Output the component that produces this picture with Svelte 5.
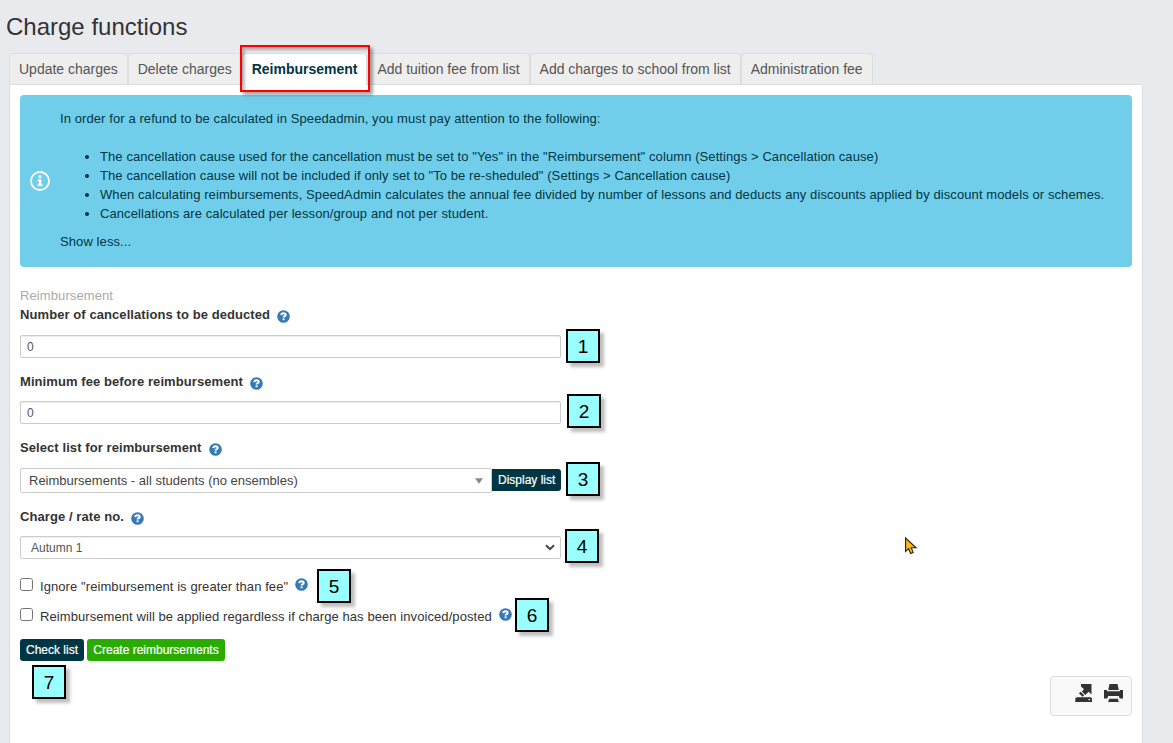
<script lang="ts">
  const tabs: string[] = [
    "Update charges",
    "Delete charges",
    "Reimbursement",
    "Add tuition fee from list",
    "Add charges to school from list",
    "Administration fee",
  ];
  let active = "Reimbursement";

  const notes: string[] = [
    'The cancellation cause used for the cancellation must be set to "Yes" in the "Reimbursement" column (Settings > Cancellation cause)',
    'The cancellation cause will not be included if only set to "To be re-sheduled" (Settings > Cancellation cause)',
    "When calculating reimbursements, SpeedAdmin calculates the annual fee divided by number of lessons and deducts any discounts applied by discount models or schemes.",
    "Cancellations are calculated per lesson/group and not per student.",
  ];

  let deducted = "0";
  let minimumFee = "0";
  let ignoreGreater = false;
  let applyRegardless = false;

  // numbered callouts lying over the form
  const callouts = [
    { n: 1, x: 566, y: 329 },
    { n: 2, x: 567, y: 394 },
    { n: 3, x: 566, y: 462 },
    { n: 4, x: 565, y: 529 },
    { n: 5, x: 317, y: 569 },
    { n: 6, x: 515, y: 598 },
    { n: 7, x: 32, y: 665 },
  ];
</script>

{#snippet help()}
  <svg class="help" viewBox="0 0 13 13">
    <circle cx="6.5" cy="6.5" r="6.3" fill="#337ab7" />
    <path
      d="M4.3 5.100C4.400 3.700 5.400 3.200 6.500 3.200C7.800 3.200 8.700 3.900 8.700 4.900C8.700 6.300 6.600 6.100 6.600 7.600"
      fill="none"
      stroke="#fff"
      stroke-width="2"
    />
    <path d="M5.600 8.400h2v1.800h-2z" fill="#fff" />
  </svg>
{/snippet}

<div class="page">
  <h1>Charge functions</h1>

  <div class="tabs">
    {#each tabs as tab}
      <button class="tab" class:active={tab === active} on:click={() => (active = tab)}>{tab}</button>
    {/each}
  </div>

  <div class="panel">
    <div class="info">
      <svg class="infoIcon" viewBox="0 0 20 20">
        <circle cx="10" cy="10" r="9" fill="none" stroke="#fff" stroke-width="1.8" />
        <path d="M8.6 4.6h2.8v2.5H8.6zM7.8 8.3h3.6v4.8h1v1.8H7.800v-1.8h1V10h-1z" fill="#fff" />
      </svg>
      <div class="infoText">
        <p>In order for a refund to be calculated in Speedadmin, you must pay attention to the following:</p>
        <ul>
          {#each notes as note}
            <li>{note}</li>
          {/each}
        </ul>
        <p>Show less...</p>
      </div>
    </div>

    <div class="form">
      <div class="legend">Reimbursement</div>
      <div class="label">Number of cancellations to be deducted {@render help()}</div>
      <input class="field" type="text" bind:value={deducted} />

      <div class="label second">Minimum fee before reimbursement {@render help()}</div>
      <input class="field" type="text" bind:value={minimumFee} />

      <div class="label third">Select list for reimbursement {@render help()}</div>
      <div class="listRow">
        <div class="combo">
          <span>Reimbursements - all students (no ensembles)</span>
          <svg width="8" height="6" viewBox="0 0 8 6"><path d="M0 .3h8L4 5.7z" fill="#888" /></svg>
        </div>
        <button class="btn dark">Display list</button>
      </div>

      <div class="label fourth">Charge / rate no. {@render help()}</div>
      <div class="select">
        <span>Autumn 1</span>
        <svg width="10" height="7" viewBox="0 0 10 7">
          <path d="M1 1.2l4 4 4-4" fill="none" stroke="#444" stroke-width="2" />
        </svg>
      </div>

      <label class="check">
        <input type="checkbox" bind:checked={ignoreGreater} />
        <span>Ignore "reimbursement is greater than fee"</span>
        {@render help()}
      </label>
      <label class="check">
        <input type="checkbox" bind:checked={applyRegardless} />
        <span>Reimbursement will be applied regardless if charge has been invoiced/posted</span>
        {@render help()}
      </label>

      <div class="actions">
        <button class="btn dark">Check list</button>
        <button class="btn green">Create reimbursements</button>
      </div>
    </div>

    <div class="tools">
      <svg width="18" height="19" viewBox="0 0 18 19" fill="#333">
        <path d="M6 0h10.500v10.500L13.600 7.700 10.300 11 6.800 7.500 9 5.200 6 2.500zM5.600 7.700l3.600 3.600-1.700 1.500-3.600-3.500z" />
        <path d="M1.500 13.200h14.500l1 1.200V18H.300v-3.600zM13.500 15v1.300H15V15z" fill-rule="evenodd" />
      </svg>
      <svg width="19" height="19" viewBox="0 0 19 19" fill="#333">
        <path d="M5.500 0h8l1.300 6H4.200z" />
        <path d="M0 6h3v1.300h13V6h3v8.500h-3.200L14.700 12H4.300l-1.100 2.500H0z" />
        <path d="M5.300 14.700h8.400l1.200 3.300H4.100z" />
      </svg>
    </div>
  </div>

  <div class="highlight"></div>
  {#each callouts as c}
    <div class="callout" style="left: {c.x}px; top: {c.y}px;">{c.n}</div>
  {/each}
  <svg class="cursor" width="13" height="18" viewBox="0 0 13 18">
    <path
      d="M.6 1v13.500l3-2.800 2 4.800 2.600-1.100-2-4.600h4.900z"
      fill="#ffb90f"
      stroke="#222"
      stroke-width="1.1"
    />
  </svg>
</div>

<style>
  :global(body) {
    background: #e9eaee;
  }
  .page {
    position: relative;
    box-sizing: border-box;
    width: 1173px;
    height: 743px;
    padding-left: 9px;
    overflow: hidden;
    display: flex;
    flex-direction: column;
    font-family: "Liberation Sans", Arial, sans-serif;
    font-size: 13px;
    line-height: 19px;
    color: #333;
  }
  h1 {
    margin: 12px 0 11px -3px;
    font-size: 24px;
    line-height: 30px;
    font-weight: normal;
  }

  .tabs {
    display: flex;
    height: 31px;
  }
  .tab {
    box-sizing: border-box;
    height: 31px;
    padding: 0 9px;
    border: 1px solid #ddd;
    border-bottom: 0;
    border-radius: 4px 4px 0 0;
    background: #eee;
    color: #555;
    font: 14px/30px "Liberation Sans", Arial, sans-serif;
    letter-spacing: -0.01px;
    white-space: nowrap;
  }
  .tab.active {
    height: 32px;
    padding-bottom: 1px;
    background: #fff;
    color: #003644;
    font-weight: bold;
    z-index: 1;
  }

  .panel {
    box-sizing: border-box;
    width: 1134px;
    flex: 1;
    padding: 10px;
    border: 1px solid #ddd;
    border-bottom: 0;
    background: #fff;
    display: flex;
    flex-direction: column;
  }
  .info {
    box-sizing: border-box;
    height: 172px;
    padding: 14px 10px 16px;
    display: flex;
    align-items: center;
    gap: 10px;
    border-radius: 4px;
    background: #71ceeb;
    color: #003644;
    letter-spacing: 0.092px;
  }
  .infoIcon {
    width: 20px;
    height: 20px;
    margin-top: 2px;
  }
  .infoText p {
    margin: 0;
  }
  .infoText ul {
    margin: 19px 0 9px;
    padding-left: 40px;
    white-space: nowrap;
  }

  .form {
    width: 541px;
    margin-top: 19px;
    display: flex;
    flex-direction: column;
  }
  .legend {
    color: #aaa;
    letter-spacing: 0.1px;
  }
  .label {
    height: 19px;
    margin-bottom: 11px;
    display: flex;
    gap: 7px;
    font-weight: bold;
    letter-spacing: 0.08px;
  }
  .second {
    margin-top: 14px;
    margin-bottom: 10px;
  }
  .third {
    margin-top: 14px;
  }
  .fourth {
    margin-top: 14px;
    margin-bottom: 10px;
  }
  .help {
    width: 13px;
    height: 13px;
    margin-top: 5px;
    flex: none;
  }
  .field,
  .select,
  .combo {
    box-sizing: border-box;
    border: 1px solid #ccc;
    border-radius: 2px;
    background: #fff;
    color: #555;
  }
  .field {
    width: 541px;
    height: 23px;
    padding: 0 6px;
    font: 12px "Liberation Sans", Arial, sans-serif;
    box-shadow: inset 0 1px 1px rgba(0, 0, 0, 0.075);
  }
  .listRow {
    display: flex;
    align-items: flex-start;
  }
  .combo {
    width: 472px;
    height: 25px;
    padding: 0 8px;
    display: flex;
    align-items: center;
    justify-content: space-between;
    color: #444;
  }
  .select {
    height: 23px;
    padding: 0 5px 0 10px;
    display: flex;
    align-items: center;
    justify-content: space-between;
    font-size: 12px;
    box-shadow: inset 0 1px 1px rgba(0, 0, 0, 0.075);
  }
  .select span {
    padding-top: 2px;
  }

  .check {
    height: 19px;
    margin-top: 18px;
    display: flex;
    letter-spacing: 0.08px;
  }
  .check + .check {
    margin-top: 11px;
  }
  .check input {
    width: 13px;
    height: 13px;
    margin: 1px 7px 0 0;
  }
  .check .help {
    margin: 1px 0 0 7px;
  }

  .btn {
    box-sizing: border-box;
    height: 22px;
    padding: 0 6px;
    border: 0;
    border-radius: 3px;
    color: #fff;
    font: 12px/22px "Liberation Sans", Arial, sans-serif;
    -webkit-text-stroke: 0.2px #fff;
    white-space: nowrap;
  }
  .dark {
    background: #003644;
  }
  .green {
    width: 138px;
    background: #2aab00;
  }
  .listRow .btn {
    width: 69px;
    margin-top: 1px;
    border-radius: 0 3px 3px 0;
  }
  .actions {
    margin-top: 13px;
    display: flex;
    gap: 3px;
  }

  .tools {
    box-sizing: border-box;
    width: 82px;
    height: 40px;
    margin: 15px 0 0 auto;
    padding: 7px 8px 0 0;
    display: flex;
    justify-content: flex-end;
    gap: 11px;
    border: 1px solid #ddd;
    border-radius: 4px;
    background: #f9f9f9;
  }

  .highlight {
    position: absolute;
    left: 240px;
    top: 45px;
    box-sizing: border-box;
    width: 130px;
    height: 47px;
    border: 2px solid #f00;
    box-shadow:
      3px 3px 3px rgba(0, 0, 0, 0.35),
      inset 3px 3px 3px rgba(0, 0, 0, 0.25);
    z-index: 2;
  }
  .callout {
    position: absolute;
    box-sizing: border-box;
    width: 34px;
    height: 34px;
    border: 2px solid #000;
    background: #9ff;
    box-shadow: 4px 4px 3px rgba(0, 0, 0, 0.25);
    color: #000;
    font-size: 19px;
    line-height: 31px;
    text-align: center;
  }
  .cursor {
    position: absolute;
    left: 905px;
    top: 537px;
  }
</style>
